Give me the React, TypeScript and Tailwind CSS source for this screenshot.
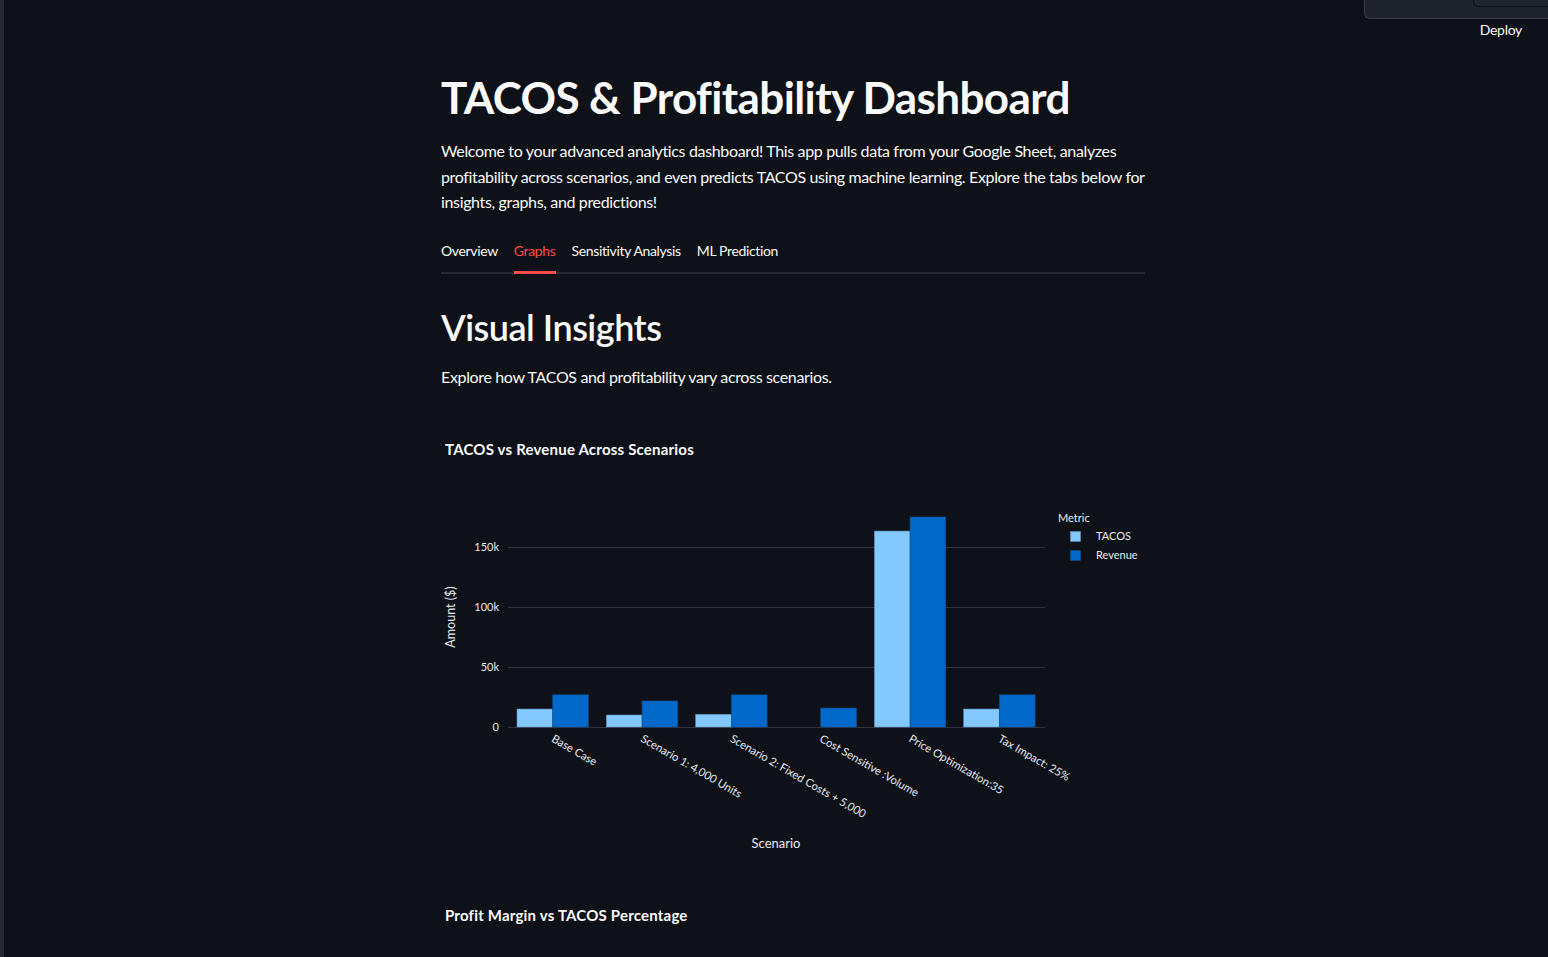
import React from "react";

const scenarios = [
  { name: "Base Case", tacos: 15, revenue: 26.8 },
  { name: "Scenario 1: 4,000 Units", tacos: 10, revenue: 21.7 },
  { name: "Scenario 2: Fixed Costs + 5,000", tacos: 10.6, revenue: 26.8 },
  { name: "Cost Sensitive :Volume", tacos: 0, revenue: 15.8 },
  { name: "Price Optimization:35", tacos: 163.3, revenue: 175 },
  { name: "Tax Impact: 25%", tacos: 15, revenue: 26.8 },
];

function Chart() {
  const x0 = 68;
  const x1 = 604;
  const y0 = 257;
  const k = 1.2; // px per 1k
  const band = (x1 - x0) / scenarios.length;
  const bw = 35.7;
  const ticks = [0, 50, 100, 150];
  const font = "'Lato', sans-serif";
  return (
    <svg width={704} height={400} viewBox="0 0 704 400" className="block">
      {ticks.map((t) => (
        <g key={t}>
          <line x1={x0 - 1} x2={x1} y1={y0 - t * k + 0.5} y2={y0 - t * k + 0.5} stroke="#31333f" strokeWidth={1} />
          <text x={58} y={y0 - t * k + 4} textAnchor="end" fill="#e6eaf1" fontSize={11} fontFamily={font}>
            {t === 0 ? "0" : `${t}k`}
          </text>
        </g>
      ))}
      <text
        transform={`translate(14 ${y0 - 110}) rotate(-90)`}
        textAnchor="middle"
        fill="#e6eaf1"
        fontSize={12.5}
        fontFamily={font}
      >
        Amount ($)
      </text>
      {scenarios.map((s, i) => {
        const b = x0 + i * band;
        const tx = b + 8;
        const rx = b + 8 + bw;
        const c = b + band / 2;
        return (
          <g key={s.name}>
            {s.tacos > 0 && (
              <rect x={tx} y={y0 - s.tacos * k} width={bw} height={s.tacos * k} fill="#83c9ff" stroke="#5a8db5" strokeWidth={0.6} />
            )}
            <rect x={rx} y={y0 - s.revenue * k} width={bw} height={s.revenue * k} fill="#0068c9" stroke="#0b4f8f" strokeWidth={0.6} />
            <text
              transform={`translate(${c - 3} ${y0 + 14}) rotate(30)`}
              fill="#e6eaf1"
              fontSize={11.2}
              fontFamily={font}
            >
              {s.name}
            </text>
          </g>
        );
      })}
      <text x={335} y={378} textAnchor="middle" fill="#e6eaf1" fontSize={13} fontFamily={font}>
        Scenario
      </text>
      <text x={617} y={52} fill="#e6eaf1" fontSize={11} fontFamily={font}>
        Metric
      </text>
      <rect x={629.5} y={61.5} width={10} height={10} fill="#83c9ff" stroke="#5a8db5" strokeWidth={0.6} />
      <text x={655} y={70} fill="#e6eaf1" fontSize={11} fontFamily={font}>
        TACOS
      </text>
      <rect x={629.5} y={80.5} width={10} height={10} fill="#0068c9" stroke="#0b4f8f" strokeWidth={0.6} />
      <text x={655} y={89} fill="#e6eaf1" fontSize={11} fontFamily={font}>
        Revenue
      </text>
    </svg>
  );
}

export default function App() {
  const tabs = ["Overview", "Graphs", "Sensitivity Analysis", "ML Prediction"];
  return (
    <div
      className="relative flex h-[957px] overflow-hidden bg-[#0e1117] text-[#fafafa]"
      style={{ fontFamily: "'Lato', 'Noto Sans', sans-serif" }}
    >
      <div className="w-[4px] shrink-0 bg-[#262730]" />
      <div className="absolute right-0 top-0 h-[19px] w-[184px] rounded-bl-[6px] border-b border-l border-[#3b3f49] bg-[#1f232b]">
        <div className="absolute right-0 top-0 h-[7px] w-[75px] rounded-bl-[5px] border-b border-l border-[#0e1117]" />
      </div>
      <div className="absolute right-[26px] top-[20px] text-[14px] leading-[20px] tracking-[-0.3px] text-[#fafafa]">
        Deploy
      </div>

      <main className="pl-[437px]">
        <div className="w-[704px]">
          <h1 className="mt-[71px] text-[44px] font-bold leading-[52px] tracking-[-0.6px]">
            TACOS &amp; Profitability Dashboard
          </h1>
          <p className="mt-[15px] text-[16px] leading-[25.6px] tracking-[-0.35px]">
            Welcome to your advanced analytics dashboard! This app pulls data from your Google Sheet, analyzes
            profitability across scenarios, and even predicts TACOS using machine learning. Explore the tabs below for
            insights, graphs, and predictions!
          </p>
          <div className="mt-[15px]">
            <div className="flex h-[42px] items-center gap-[16px] text-[14px] tracking-[-0.35px]">
              {tabs.map((t) => (
                <div
                  key={t}
                  className={
                    t === "Graphs"
                      ? "relative flex h-full items-center text-[#ff4b4b]"
                      : "relative flex h-full items-center text-[#fafafa]"
                  }
                >
                  {t}
                  {t === "Graphs" && <div className="absolute bottom-[-2px] left-0 right-0 h-[3px] bg-[#ff4b4b]" />}
                </div>
              ))}
            </div>
            <div className="h-[2px] bg-[#262730]" />
          </div>
          <h2 className="mt-[32px] text-[36px] font-semibold leading-[43px] tracking-[-0.5px]">Visual Insights</h2>
          <p className="mt-[15px] text-[16px] leading-[25.6px] tracking-[-0.35px]">
            Explore how TACOS and profitability vary across scenarios.
          </p>
          <div className="mt-[50px] pl-[4px] text-[15px] font-bold leading-[20px] tracking-[0.2px]">
            TACOS vs Revenue Across Scenarios
          </div>
          <div className="mt-[11px]">
            <Chart />
          </div>
          <div className="mt-[35px] pl-[4px] text-[15px] font-bold leading-[20px] tracking-[0.2px]">
            Profit Margin vs TACOS Percentage
          </div>
        </div>
      </main>
    </div>
  );
}
